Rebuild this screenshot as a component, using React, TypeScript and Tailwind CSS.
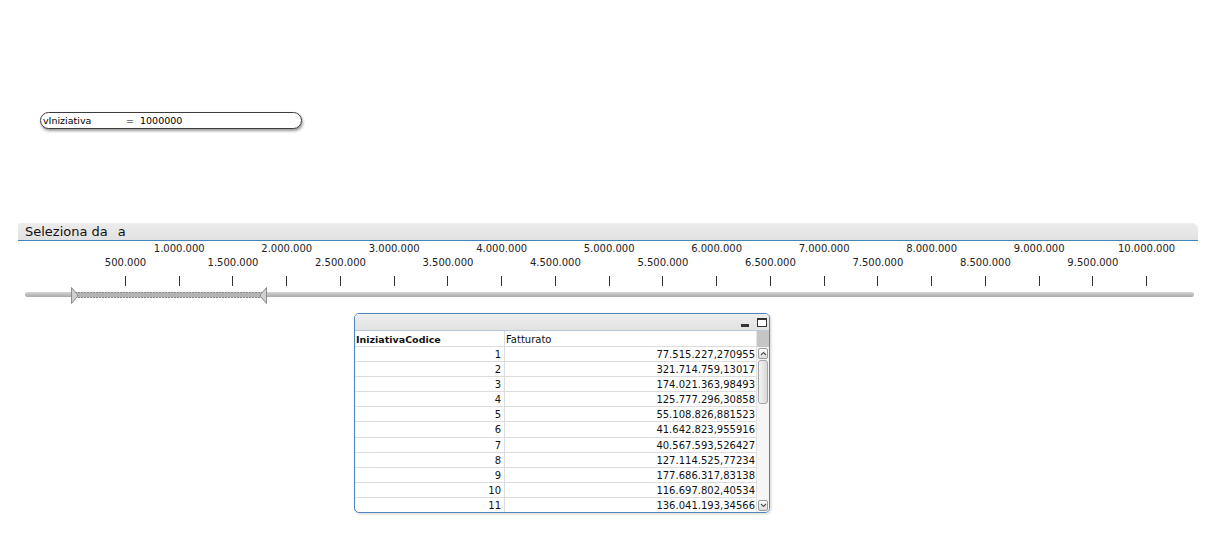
import React from 'react';

const FONT = { fontFamily: '"DejaVu Sans", Verdana, sans-serif' };

const STEP = 53.74;
const ORIGIN = 71.26 - 18; // scale origin relative to the slider box

const fmt = (v: number) => v.toLocaleString('de-DE');

const rows: [number, string][] = [
  [1, '77.515.227,270955'],
  [2, '321.714.759,13017'],
  [3, '174.021.363,98493'],
  [4, '125.777.296,30858'],
  [5, '55.108.826,881523'],
  [6, '41.642.823,955916'],
  [7, '40.567.593,526427'],
  [8, '127.114.525,77234'],
  [9, '177.686.317,83138'],
  [10, '116.697.802,40534'],
  [11, '136.041.193,34566'],
];

function VariableBox() {
  return (
    <div className="w-[262px] h-[17px] rounded-full border border-[#3c3c3c] bg-white shadow-[1px_2px_3px_rgba(0,0,0,0.4)] flex items-center pl-[2px] pt-[1px] text-[9.5px] leading-none whitespace-pre">
      <span className="w-[83px]">vIniziativa</span>
      <span>=  1000000</span>
    </div>
  );
}

function Thumb() {
  return (
    <svg width="197" height="17" viewBox="0 0 197 17">
      <rect x="4" y="5.5" width="189" height="5" fill="#b4b4b4" stroke="#8a8a8a" strokeDasharray="2 1" />
      <polygon points="0.5,0.5 0.5,16.5 6.5,9.5 6.5,7.5" fill="#cfcfcf" stroke="#8c8c8c" />
      <polygon points="195.5,0.5 195.5,16.5 189.5,9.5 189.5,7.5" fill="#cfcfcf" stroke="#8c8c8c" />
    </svg>
  );
}

function RangeSlider() {
  const ticks = Array.from({ length: 20 }, (_, i) => i + 1);
  return (
    <section className="mt-[94px] ml-[18px] w-[1180px]">
      <div className="h-[18px] bg-gradient-to-b from-[#ececec] to-[#e2e2e2] border-b border-[#3f87bb] rounded-tl-[3px] rounded-tr-[6px] pl-[7px] text-[13px] leading-[17px] text-[#111] whitespace-pre">
        Seleziona da<span className="ml-[10px]">a</span>
      </div>
      <div className="relative h-[62px]">
        {ticks.map((i) => {
          const x = ORIGIN + i * STEP;
          const upper = i % 2 === 0;
          return (
            <React.Fragment key={i}>
              <span
                className={`absolute -translate-x-1/2 text-[10px] leading-[12px] text-[#222] whitespace-nowrap ${upper ? 'top-[2px]' : 'top-[16px]'}`}
                style={{ left: x + 0.5 }}
              >
                {fmt(i * 500000)}
              </span>
              <span className="absolute top-[35px] h-[10px] w-px bg-[#333]" style={{ left: x }} />
            </React.Fragment>
          );
        })}
        <div className="absolute left-[7px] top-[51px] w-[1169px] h-[5px] rounded-full bg-gradient-to-b from-[#d6d6d6] to-[#a9a9a9]" />
        <div className="absolute left-[53px] top-[46px]">
          <Thumb />
        </div>
      </div>
    </section>
  );
}

function Scrollbar() {
  return (
    <div className="w-[13px] flex flex-col bg-[#f6f6f6] border-l border-[#e2e2e2]">
      <div className="h-[16px] bg-[#c5c5c5]" />
      <div className="mt-[1px] mx-[1px] h-[11px] border border-[#9a9a9a] rounded-[2px] bg-gradient-to-b from-white to-[#dcdcdc] flex items-center justify-center">
        <svg width="7" height="5" viewBox="0 0 7 5"><path d="M1 4 L3.5 1.5 L6 4" fill="none" stroke="#555" strokeWidth="1.2" /></svg>
      </div>
      <div className="mt-[1px] mx-[1px] h-[44px] border border-[#a5a5a5] rounded-[3px] bg-gradient-to-r from-[#f4f4f4] to-[#d8d8d8]" />
      <div className="flex-1" />
      <div className="mb-[1px] mx-[1px] h-[11px] border border-[#9a9a9a] rounded-[2px] bg-gradient-to-b from-white to-[#dcdcdc] flex items-center justify-center">
        <svg width="7" height="5" viewBox="0 0 7 5"><path d="M1 1 L3.5 3.5 L6 1" fill="none" stroke="#555" strokeWidth="1.2" /></svg>
      </div>
    </div>
  );
}

function DataTable() {
  return (
    <div className="ml-[354px] mt-[10px] w-[416px] h-[200px] border border-[#4f86be] rounded-[5px] overflow-hidden flex flex-col bg-white shadow-[1px_1px_3px_rgba(0,0,0,0.18)]">
      <div className="h-[17px] shrink-0 bg-gradient-to-b from-[#eeeeee] to-[#e2e2e2] border-b border-[#b6c7d8] flex items-center justify-end pr-[2px] gap-[8px]">
        <div className="w-[8px] h-[3px] bg-[#333] mt-[7px]" />
        <div className="w-[10px] h-[9px] border border-[#333] border-t-[2px] bg-white" />
      </div>
      <div className="flex flex-1 min-h-0">
        <div className="w-[401px] flex flex-col text-[10px] text-[#111]">
          <div className="h-[16px] shrink-0 flex border-b border-[#dcdcdc]">
            <div className="w-[150px] border-r border-[#dcdcdc] pl-[1px] pt-[1px] font-bold text-[9.5px] leading-[15px]">IniziativaCodice</div>
            <div className="flex-1 pl-[1px] pt-[1px] leading-[15px]">Fatturato</div>
          </div>
          {rows.map(([id, value]) => (
            <div key={id} className="h-[15.1px] shrink-0 flex border-b border-[#dcdcdc]">
              <div className="w-[150px] border-r border-[#dcdcdc] text-right pr-[3px] pt-[1px] leading-[14px]">{id}</div>
              <div className="flex-1 text-right pr-[1px] pt-[1px] leading-[14px]">{value}</div>
            </div>
          ))}
        </div>
        <Scrollbar />
      </div>
    </div>
  );
}

export default function App() {
  return (
    <div className="w-[1217px] h-[551px] bg-white overflow-hidden text-black" style={FONT}>
      <div className="pt-[112px] pl-[40px]">
        <VariableBox />
      </div>
      <RangeSlider />
      <DataTable />
    </div>
  );
}
